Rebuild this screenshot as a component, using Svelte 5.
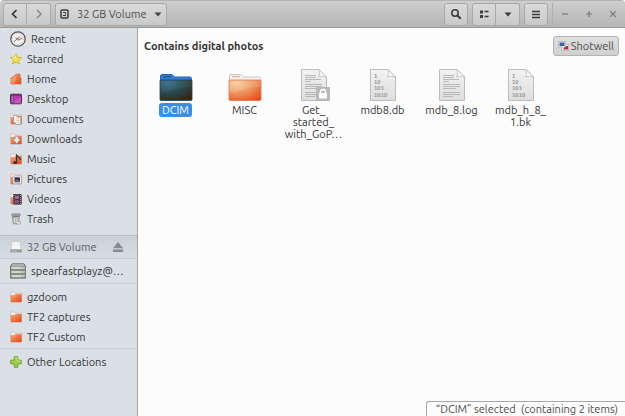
<script>
  const places = [
    { name: 'Recent', icon: 'recent', large: true },
    { name: 'Starred', icon: 'star' },
    { name: 'Home', icon: 'home' },
    { name: 'Desktop', icon: 'desktop' },
    { name: 'Documents', icon: 'documents' },
    { name: 'Downloads', icon: 'downloads' },
    { name: 'Music', icon: 'music' },
    { name: 'Pictures', icon: 'pictures' },
    { name: 'Videos', icon: 'videos' },
    { name: 'Trash', icon: 'trash' }
  ];
  const bookmarks = ['gzdoom', 'TF2 captures', 'TF2 Custom'];
  const files = [
    { lines: ['DCIM'], icon: 'folder', selected: true },
    { lines: ['MISC'], icon: 'folder' },
    { lines: ['Get_', 'started_', 'with_GoP…'], icon: 'text', locked: true },
    { lines: ['mdb8.db'], icon: 'binary' },
    { lines: ['mdb_8.log'], icon: 'text' },
    { lines: ['mdb_h_8_', '1.bk'], icon: 'binary' }
  ];
</script>

{#snippet placeIcon(kind)}
  {#if kind === 'recent'}
    <svg width="16" height="16" viewBox="0 0 16 16" aria-hidden="true">
      <circle cx="8" cy="8" r="7.2" fill="#f4f4f2" stroke="#55585a" stroke-width="1.3" />
      <circle cx="8" cy="8" r="5.4" fill="none" stroke="#a9abab" stroke-width="1" stroke-dasharray="1 1.8" />
      <path d="M4 10.5 10.5 5.2" stroke="#7e8082" stroke-width="1" />
      <path d="M5.5 6.5 8.3 9 12.5 7" fill="none" stroke="#d9746d" stroke-width="1.1" />
      <circle cx="8" cy="8" r="1.2" fill="#999" />
    </svg>
  {:else}
    <svg width="12" height="12" viewBox="0 0 12 12" aria-hidden="true">
      {#if kind === 'star'}
        <path d="M6 .8 7.5 4.2 11.4 4.6 8.5 7.2 9.4 11 6 9.1 2.6 11 3.5 7.2.6 4.6 4.5 4.2Z" fill="#f4e04b" stroke="#cfae22" stroke-width=".8" stroke-linejoin="round" />
        <path d="M6 2.2 5 5 2.5 5.2" fill="none" stroke="#fffbd0" stroke-width=".8" />
      {:else if kind === 'home'}
        <path d="M.5 5.5 6.5 1 8 2V1H10V3.6L11 5.2V11H1V6.5Z" fill="url(#orange)" stroke="#d76339" stroke-width=".7" />
        <path d="M1.2 5.7 6.5 2 6 6.5 4.5 10.5H1.5Z" fill="#fba879" opacity=".6" />
      {:else if kind === 'desktop'}
        <rect x=".5" y="1.2" width="11" height="9.6" rx="1" fill="#b838b8" stroke="#572357" />
        <path d="M.6 2H11.4" stroke="#6e316b" stroke-width="1.5" />
        <path d="M1 3H3.6V10.3H1Z" fill="#793c7e" />
        <path d="M1.6 4.2H3M1.6 6.2H3M1.6 8.2H3" stroke="#e7b7e5" />
        <path d="M4 8.6 11 4V10.2H4Z" fill="#d867d5" opacity=".55" />
      {:else if kind === 'trash'}
        <path d="M2.4 2.8H9.3L8.4 10.8H3.2Z" fill="#b5b8b7" stroke="#7e8280" stroke-width=".7" />
        <path d="M4.5 4V9.8M7 4V9.8" stroke="#dcdddb" />
        <rect x="1.6" y=".8" width="8.7" height="2.3" rx="1" fill="#a1a5a4" stroke="#7b7f7d" stroke-width=".6" />
        <path d="M3.2 3.7H8.3" stroke="#676b6a" stroke-width=".8" />
        <path d="M7.5 8.7 10.4 8.5V11H6.8" fill="#f1f2ef" stroke="#868a87" stroke-width=".6" />
      {:else if kind === 'drive'}
        <path d="M2 .7H10L11.2 9H.8Z" fill="#f5f5f4" stroke="#c5c7c8" stroke-width=".7" />
        <path d="M.8 8.7H11.2V11H.8Z" fill="#9c9fa0" stroke="#888b8d" stroke-width=".6" />
        <path d="M2 10H7" stroke="#ced0d0" stroke-width=".7" />
      {:else if kind === 'plus'}
        <path d="M4.2.7H7.8V4.2H11.3V7.8H7.8V11.3H4.2V7.8H.7V4.2H4.2Z" fill="#a2ce4d" stroke="#699b27" stroke-width=".9" stroke-linejoin="round" />
        <path d="M5 1.5H7V5H10.5" fill="none" stroke="#d4ed91" stroke-width=".7" />
      {:else}
        <path d="M.6 1H4.8L5.6 2H11.4V10.8H.6Z" fill="#f3eeea" stroke="#c7b4aa" stroke-width=".6" />
        <path d="M1 4.6 4.6 4.4 5.6 3.2H11.4V11H1Z" fill="url(#orange)" stroke="#dc6134" stroke-width=".4" />
        {#if kind === 'documents'}
          <path d="M3.5 2.5H7V4H10.8V11.3H5.2V9.8H3.5Z" fill="#f7f5f2" stroke="#9a8d86" stroke-width=".7" />
          <path d="M6.4 5.8H9.6M6.4 7.4H9.6M6.4 9H9.6" stroke="#bcb9b6" stroke-width=".7" />
        {:else if kind === 'downloads'}
          <path d="M5 3.2H8.4V6H11L6.8 10.7 2.5 6H5Z" fill="#ebe9e6" stroke="#918883" stroke-width=".7" />
        {:else if kind === 'music'}
          <path d="M6.6 9.4V2.2L9.3 4.8 10.6 7" fill="none" stroke="#353737" stroke-width="1.3" />
          <ellipse cx="5.2" cy="9.5" rx="2" ry="1.6" fill="#353737" />
        {:else if kind === 'pictures'}
          <rect x="3" y="3" width="8.5" height="7.8" fill="#f7f7f6" stroke="#9a9a9a" stroke-width=".6" />
          <rect x="4.5" y="4.3" width="5.5" height="5" fill="#3c3149" />
          <path d="M4.6 8 7.5 6.2 10 8.8H4.6Z" fill="#7d6b83" />
        {:else if kind === 'videos'}
          <rect x="3.2" y="1.2" width="8.3" height="10.3" fill="#3c2836" />
          <rect x="5" y="2.6" width="4.2" height="3.5" fill="#907397" />
          <rect x="5" y="7" width="4.2" height="3.4" fill="#765884" />
          <path d="M4 2V11M10.5 2V11" stroke="#d8cbd2" stroke-width=".7" stroke-dasharray="1 1" />
        {/if}
      {/if}
    </svg>
  {/if}
{/snippet}

{#snippet fileIcon(file)}
  <svg width="34" height="34" viewBox="0 0 34 34" aria-hidden="true">
    {#if file.icon === 'folder'}
      <path d="M1.5 33V9Q1.5 7.5 3 7.5H13L15.5 10H31Q32.5 10 32.5 11.5V33" fill={file.selected ? '#2e7fda' : '#f6f4f3'} stroke={file.selected ? '#2468b4' : '#c8c6c4'} />
      <path d="M4 9.7H12" stroke={file.selected ? '#28567c' : '#f3b292'} stroke-width="1.4" />
      <rect x="1" y="13" width="32" height="20.5" rx="1" fill={file.selected ? 'url(#dark-folder)' : 'url(#folder)'} stroke={file.selected ? '#30404a' : '#d97850'} stroke-width=".8" />
      <path d="M1.5 13.5H32.5V20Q21 20 14 23T1.5 25Z" fill="#fff" opacity={file.selected ? 0.05 : 0.15} />
    {:else}
      <path d="M4.5 2.5H22L29.5 10V33.5H4.5Z" fill="url(#paper)" stroke="#bdbdbd" />
      <path d="M22 2.5Q23.5 6.5 21.5 10 25.5 8.5 29.5 10Z" fill="#fafafa" stroke="#bcbcbc" stroke-width=".8" />
      {#if file.icon === 'text'}
        <path d="M8 8.5H19M8 10.5H19M8 12.5H24M8 14.5H14M8 17.5H25M8 19.5H25M8 21.5H21M8 25.5H25M8 27.5H25M8 29.5H18" stroke="#b8b8b8" stroke-width="1.2" />
        {#if file.locked}
          <rect x="19" y="20" width="14" height="14" rx="1" fill="#b9b9b6" />
          <path d="M23.5 26.5V25Q23.5 22.4 26 22.4T28.5 25V26.5" fill="none" stroke="#fff" stroke-width="1.5" />
          <rect x="22" y="26" width="8" height="5.5" fill="#fff" />
        {/if}
      {:else}
        <g fill="#999" font-family="Liberation Sans, sans-serif" font-size="6" font-weight="700">
          <text x="8" y="11">1</text>
          <text x="8" y="17">10</text>
          <text x="8" y="23">101</text>
          <text x="8" y="30">1010</text>
        </g>
      {/if}
    {/if}
  </svg>
{/snippet}

<div class="window">
  <svg class="defs" width="0" height="0" aria-hidden="true">
    <defs>
      <linearGradient id="orange" x1="0" y1="0" x2="1" y2="1"><stop stop-color="#fba46c" /><stop offset="1" stop-color="#e4481c" /></linearGradient>
      <radialGradient id="folder" cx=".25" cy=".15" r="1"><stop stop-color="#f6c893" /><stop offset=".5" stop-color="#ee945b" /><stop offset="1" stop-color="#e94d1d" /></radialGradient>
      <radialGradient id="dark-folder" cx=".25" cy=".1" r="1"><stop stop-color="#316f8d" /><stop offset=".5" stop-color="#284b50" /><stop offset="1" stop-color="#332718" /></radialGradient>
      <linearGradient id="paper" x1="0" y1="0" x2="0" y2="1"><stop stop-color="#f2f2f2" /><stop offset="1" stop-color="#dedede" /></linearGradient>
    </defs>
  </svg>

  <header>
    <div class="group">
      <button aria-label="Back"><svg width="12" height="12" viewBox="0 0 12 12"><path d="M7.5 2 3.5 6 7.5 10" fill="none" stroke="#333" stroke-width="1.7" /></svg></button>
      <button aria-label="Forward"><svg width="12" height="12" viewBox="0 0 12 12"><path d="M4 2 8 6 4 10" fill="none" stroke="#888" stroke-width="1.5" /></svg></button>
    </div>
    <button class="path">
      <svg width="9" height="10" viewBox="0 0 9 10" aria-hidden="true"><rect x="1" y="1" width="7" height="8" rx="1" fill="none" stroke="#3b3b3b" stroke-width="1.5" /><path d="M3 3.5H5.5V5.5M3 6.5H6" fill="none" stroke="#3b3b3b" /></svg>
      <span>32 GB Volume</span>
      <svg width="8" height="5" viewBox="0 0 8 5" aria-hidden="true"><path d="M.5 .5H7.5L4 4.5Z" fill="#444" /></svg>
    </button>
    <div class="tools">
      <button aria-label="Search"><svg width="12" height="12" viewBox="0 0 12 12"><circle cx="5" cy="5" r="3.2" fill="none" stroke="#3b3b3b" stroke-width="1.5" /><path d="M7.3 7.3 10.7 10.7" stroke="#3b3b3b" stroke-width="2" /></svg></button>
      <div class="group">
        <button aria-label="Icon view"><svg width="10" height="10" viewBox="0 0 10 10"><path d="M1 1.5H4V4.5H1ZM1 6H4V9H1Z" fill="#3b3b3b" /><path d="M5.5 2.5H9.5M5.5 7.5H9.5" stroke="#3b3b3b" stroke-width="1.3" /></svg></button>
        <button aria-label="View options"><svg width="8" height="5" viewBox="0 0 8 5"><path d="M.5.5H7.5L4 4.5Z" fill="#3b3b3b" /></svg></button>
      </div>
      <button aria-label="Menu"><svg width="8" height="9" viewBox="0 0 8 9"><path d="M0 1.5H8M0 4.5H8M0 7.5H8" stroke="#3b3b3b" stroke-width="1.5" /></svg></button>
    </div>
    <div class="controls">
      <button aria-label="Minimize"><svg width="8" height="8" viewBox="0 0 8 8"><path d="M1 4H7" stroke="#777" stroke-width="1.2" /></svg></button>
      <button aria-label="Maximize"><svg width="8" height="8" viewBox="0 0 8 8"><path d="M1 4H7M4 1V7" stroke="#777" stroke-width="1.2" /></svg></button>
      <button aria-label="Close"><svg width="8" height="8" viewBox="0 0 8 8"><path d="M1.2 1.2 6.8 6.8M6.8 1.2 1.2 6.8" stroke="#777" stroke-width="1.2" /></svg></button>
    </div>
  </header>

  <div class="body">
    <nav aria-label="Places">
      <div class="places">
        {#each places as place}
          <a href="#{place.icon}">{@render placeIcon(place.icon)}<span>{place.name}</span></a>
        {/each}
      </div>
      <div class="device current">
        <a href="#volume">{@render placeIcon('drive')}<span>32 GB Volume</span></a>
        <button aria-label="Eject"><svg width="12" height="12" viewBox="0 0 12 12"><path d="M6 1 11 7.3H1Z" fill="#858a8c" /><rect x="1" y="8.5" width="10" height="2.5" fill="#858a8c" /></svg></button>
      </div>
      <div class="device">
        <a href="#server">
          <svg width="16" height="16" viewBox="0 0 16 16" aria-hidden="true">
            <path d="M2 .8H14L15.5 3V15.2H.5V3Z" fill="#9b9f9c" stroke="#656a67" stroke-width=".8" />
            <path d="M2.2 2H13.8" stroke="#c9ccca" />
            <path d="M1.5 5H14.5M1.5 9H14.5M1.5 13H14.5" stroke="#d3d7d2" stroke-width="2.2" />
            <path d="M1 7H15M1 11H15" stroke="#6d726f" stroke-width=".9" />
            <path d="M11.5 5H13.5M11.5 9H13.5M11.5 13H13.5" stroke="#84b573" />
          </svg>
          <span>spearfastplayz@…</span>
        </a>
      </div>
      <div class="bookmarks">
        {#each bookmarks as name}
          <a href="#bookmark">{@render placeIcon('folder')}<span>{name}</span></a>
        {/each}
      </div>
      <a class="other" href="#other">{@render placeIcon('plus')}<span>Other Locations</span></a>
    </nav>

    <main>
      <div class="notice">
        <strong>Contains digital photos</strong>
        <button>
          <svg width="11" height="10" viewBox="0 0 11 10" aria-hidden="true">
            <rect x="3.5" y="3.5" width="7" height="6" fill="#fff" stroke="#aaa" stroke-width=".7" />
            <path d="M7 5H10V8.5H5Z" fill="#b62b35" />
            <rect x=".5" y=".5" width="7" height="5.5" fill="#f5f8fb" stroke="#aab0b8" stroke-width=".7" />
            <rect x="1.5" y="1.5" width="5" height="3.5" fill="#3c6698" />
          </svg>
          <span>Shotwell</span>
        </button>
      </div>
      <div class="files">
        {#each files as file}
          <button class:selected={file.selected}>
            {@render fileIcon(file)}
            <span class="label">{#each file.lines as line}<span>{line}</span>{/each}</span>
          </button>
        {/each}
      </div>
      <footer>“DCIM” selected&nbsp; (containing 2 items)</footer>
    </main>
  </div>
</div>

<style>
  :global(body) { margin: 0; background: #fff; }
  .window {
    display: flex;
    flex-direction: column;
    min-height: 100vh;
    font: 11px/14px Ubuntu, "Open Sans", sans-serif;
    color: #333;
  }
  .defs { position: absolute; }
  svg { display: block; flex: none; }
  button { font: inherit; color: inherit; margin: 0; padding: 0; border: 0; background: none; box-sizing: border-box; }
  a { color: inherit; text-decoration: none; }
  header {
    display: flex;
    align-items: center;
    height: 28px;
    box-sizing: border-box;
    padding-left: 3px;
    border-top: 1px solid #b4b4b4;
    border-bottom: 1px solid #989898;
    border-radius: 4px 4px 0 0;
    background: linear-gradient(#cecece, #b5b5b5);
  }
  header button { display: flex; align-items: center; justify-content: center; }
  .group { display: flex; }
  .group button, .path, .tools > button {
    height: 23px;
    min-width: 24px;
    border: 1px solid #a9a9a9;
    border-radius: 3px;
    background: linear-gradient(#dadada, #c9c9c9);
  }
  .group button:first-child { border-radius: 3px 0 0 3px; }
  .group button:last-child { border-left: 0; border-radius: 0 3px 3px 0; }
  .path { gap: 8px; margin-left: 4px; padding: 0 4px; }
  .path span { color: #4c4c4c; }
  .tools { display: flex; gap: 4px; margin-left: auto; padding-right: 4px; border-right: 1px solid #afafaf; }
  .controls { display: flex; }
  .controls button { width: 24px; height: 22px; }
  .body { display: flex; flex: 1; }
  nav {
    flex: none;
    width: 138px;
    box-sizing: border-box;
    border-right: 1px solid #a3a6a9;
    background: #dae0e6;
  }
  nav a { display: flex; align-items: center; gap: 5px; height: 20px; padding-left: 10px; white-space: nowrap; }
  .places { padding: 1px 0 6px; border-bottom: 1px solid #b8bec4; }
  .device { display: flex; align-items: center; height: 24px; border-bottom: 1px solid #c5cbd1; }
  .device a { flex: 1; }
  .device button { margin-right: 13px; }
  .current { height: 22px; background: linear-gradient(#c9d1d7, #d6dce2); color: #565b5f; }
  .bookmarks { padding: 3px 0 1px; border-bottom: 1px solid #c5cbd1; }
  .other { margin-top: 3px; }
  main { flex: 1; min-width: 0; display: flex; flex-direction: column; background: #fcfcfc; }
  .notice { display: flex; align-items: center; justify-content: space-between; padding: 8px 6px 0; }
  .notice button {
    display: flex;
    align-items: center;
    gap: 2px;
    height: 20px;
    padding: 0 4px;
    border: 1px solid #b3b3b3;
    border-radius: 3px;
    background: linear-gradient(#e0e0e0, #d0d0d0);
    color: #4c4c4c;
  }
  .files { display: flex; flex-wrap: wrap; align-items: flex-start; padding: 11px 3px; }
  .files button { display: flex; flex-direction: column; align-items: center; gap: 2px; width: 69px; }
  .label { display: flex; flex-direction: column; align-items: center; padding: 1px 3px; border-radius: 3px; line-height: 12px; white-space: nowrap; }
  .selected .label { background: #3a8ee6; color: #fff; }
  footer {
    align-self: flex-end;
    margin-top: auto;
    padding: 0 7px 0 9px;
    border: 1px solid #a8a8a8;
    border-width: 1px 0 0 1px;
    border-radius: 3px 0 0 0;
    color: #4c4c4c;
  }
</style>
